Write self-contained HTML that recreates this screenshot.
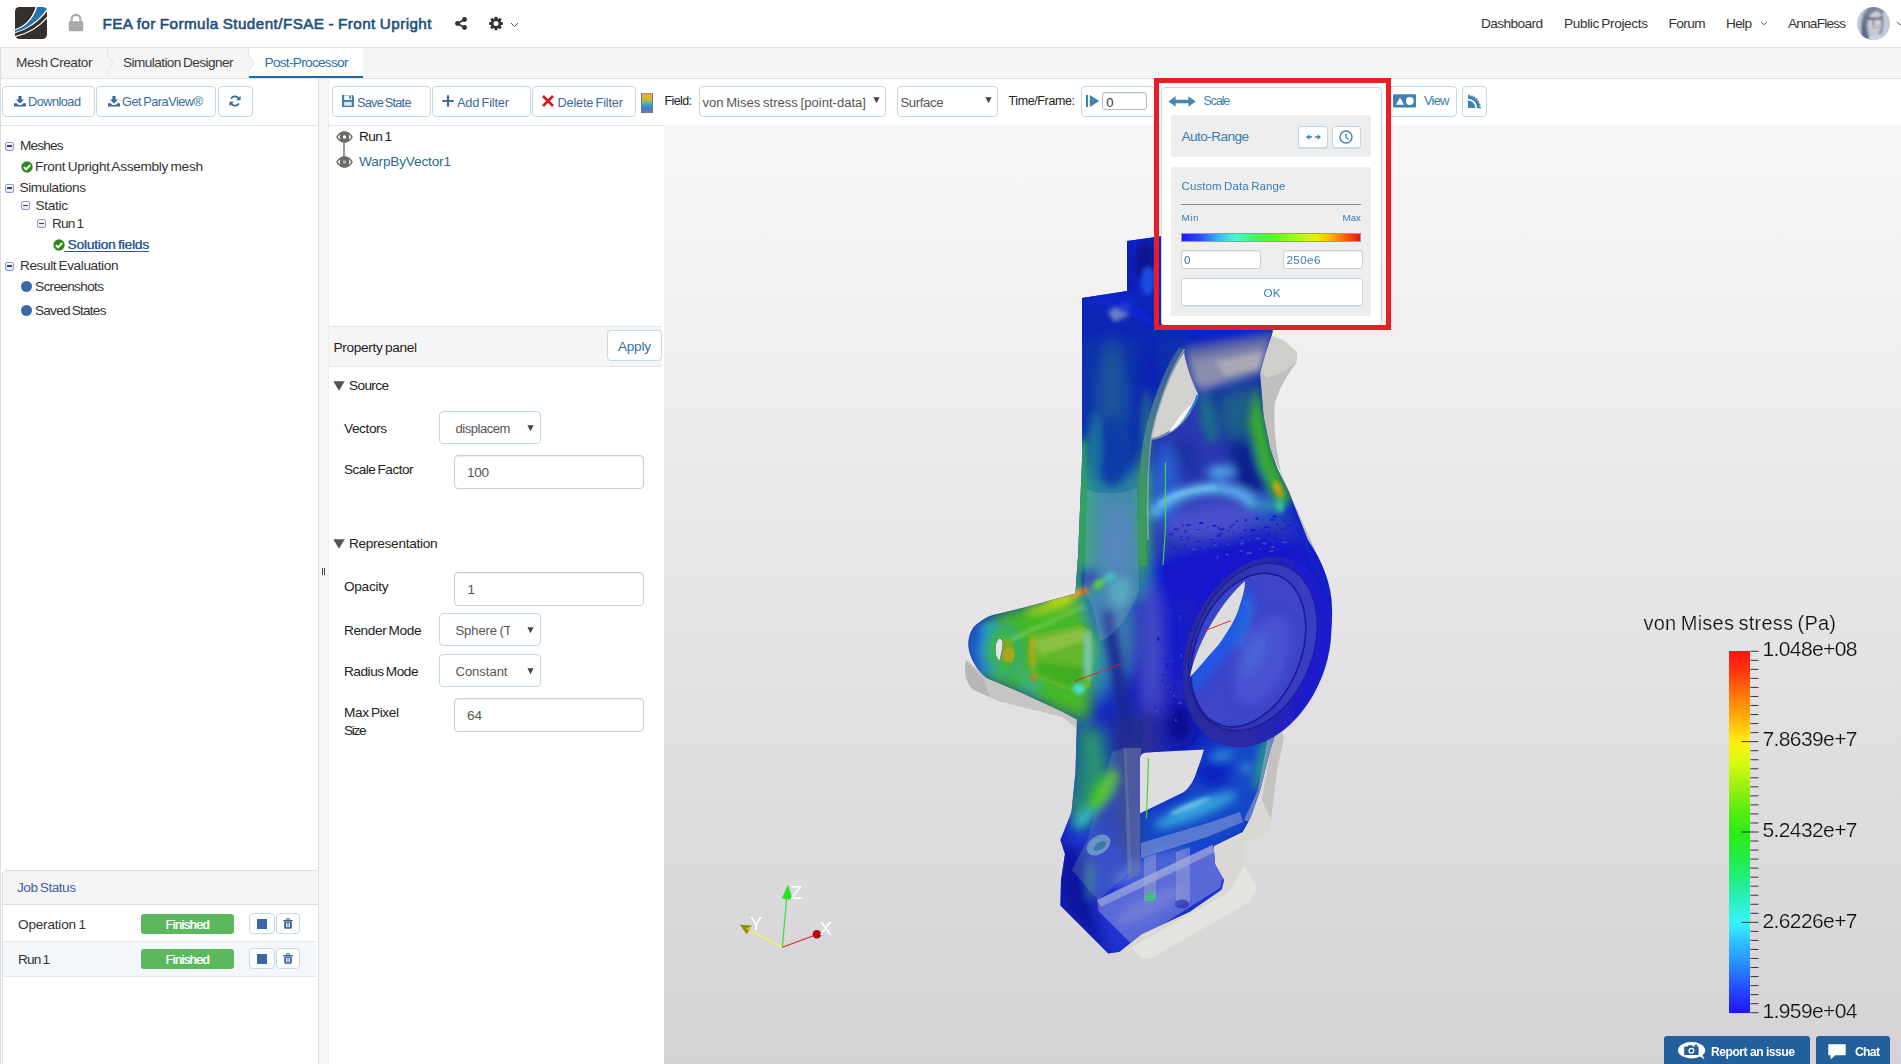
<!DOCTYPE html>
<html lang="en">
<head>
<meta charset="utf-8">
<title>FEA for Formula Student/FSAE - Front Upright</title>
<style>
*{box-sizing:border-box;margin:0;padding:0}
html,body{width:1901px;height:1064px;overflow:hidden;background:#fff}
body{font-family:"Liberation Sans",sans-serif;font-size:14px;color:#333;position:relative}
.abs{position:absolute}
.t{position:absolute;white-space:pre;display:block}
.btn{position:absolute;background:#fff;border:1px solid #c3d9ea;border-radius:4px}
.inp{position:absolute;background:#fff;border:1px solid #ccc;border-radius:4px;box-shadow:inset 0 1px 1px rgba(0,0,0,.075)}
svg{position:absolute;overflow:visible}
</style>
</head>
<body>
<div class="abs" style="left:0;top:0;width:1901px;height:48px;background:#fff;border-bottom:1px solid #e4e4e4"></div>
<svg style="left:15px;top:7px" width="32" height="32" viewBox="0 0 32 32">
<defs><clipPath id="lg"><rect x="0" y="0" width="32" height="32" rx="4.5"/></clipPath></defs>
<g clip-path="url(#lg)">
<rect width="32" height="32" fill="#35302d"/>
<path d="M21 -1 C17 12 10 19 -1 22.5 L-1 26.5 C13 23 25 14 33 3 L33 -1 Z" fill="#fff"/>
<path d="M22.5 -1 C18.5 12.5 10.5 20 -1 23.8 L-1 25.6 C12 22 24 13.5 33 0.5 L33 -1 Z" fill="#2473ad"/>
<path d="M-1 29.8 C13 27 25 19 33 9.5" fill="none" stroke="#fff" stroke-width="1.2"/>
</g></svg>
<svg style="left:68px;top:13px" width="16" height="19" viewBox="0 0 16 19">
<path d="M3.6 9 V6.2 a4.4 4.4 0 0 1 8.8 0 V9" fill="none" stroke="#aaa" stroke-width="2.2"/>
<rect x="0.8" y="8.2" width="14.4" height="10" rx="1.3" fill="#aaa"/></svg>
<span class="t" style="left:102.5px;top:16.4px;font-size:15.26px;height:15.3px;line-height:15.3px;letter-spacing:0.422px;word-spacing:-0.60px;color:#24507e;-webkit-text-stroke:0.6px #24507e;">FEA for Formula Student/FSAE - Front Upright</span>
<svg style="left:455px;top:17px" width="12" height="13" viewBox="0 0 12 13">
<g fill="#333" stroke="#333"><circle cx="9.5" cy="2.5" r="2.45" stroke="none"/><circle cx="2.5" cy="6.5" r="2.45" stroke="none"/><circle cx="9.5" cy="10.5" r="2.45" stroke="none"/>
<path d="M9.5 2.5 L2.5 6.5 L9.5 10.5" fill="none" stroke-width="1.9"/></g></svg>
<svg style="left:488px;top:16px" width="16" height="16" viewBox="0 0 16 16"><path d="M12.98 5.99 L14.87 6.13 L14.87 8.87 L12.98 9.01 L12.59 9.95 L13.82 11.39 L11.89 13.32 L10.45 12.09 L9.51 12.48 L9.37 14.37 L6.63 14.37 L6.49 12.48 L5.55 12.09 L4.11 13.32 L2.18 11.39 L3.41 9.95 L3.02 9.01 L1.13 8.87 L1.13 6.13 L3.02 5.99 L3.41 5.05 L2.18 3.61 L4.11 1.68 L5.55 2.91 L6.49 2.52 L6.63 0.63 L9.37 0.63 L9.51 2.52 L10.45 2.91 L11.89 1.68 L13.82 3.61 L12.59 5.05 Z M5.50 7.50 a2.50 2.50 0 1 0 5.00 0 a2.50 2.50 0 1 0 -5.00 0 Z" fill="#333" fill-rule="evenodd"/></svg>
<svg style="left:510px;top:22px" width="9" height="6" viewBox="0 0 9 6"><path d="M1 1 L4.5 4.5 L8 1" fill="none" stroke="#555" stroke-width="1"/></svg>
<span class="t" style="left:1481.0px;top:17.4px;font-size:13.63px;height:13.6px;line-height:13.6px;letter-spacing:-0.582px;word-spacing:-1.06px;color:#333;">Dashboard</span>
<span class="t" style="left:1564.0px;top:17.4px;font-size:13.63px;height:13.6px;line-height:13.6px;letter-spacing:-0.362px;word-spacing:-1.06px;color:#333;">Public Projects</span>
<span class="t" style="left:1668.5px;top:17.4px;font-size:13.63px;height:13.6px;line-height:13.6px;letter-spacing:-0.594px;word-spacing:-1.06px;color:#333;">Forum</span>
<span class="t" style="left:1726.0px;top:17.4px;font-size:13.63px;height:13.6px;line-height:13.6px;letter-spacing:-0.677px;word-spacing:-1.06px;color:#333;">Help</span>
<svg style="left:1760px;top:21px" width="8" height="5" viewBox="0 0 8 5"><path d="M1 0.8 L4 3.8 L7 0.8" fill="none" stroke="#555" stroke-width="1"/></svg>
<span class="t" style="left:1788.0px;top:17.4px;font-size:13.63px;height:13.6px;line-height:13.6px;letter-spacing:-0.797px;word-spacing:-1.06px;color:#333;">AnnaFless</span>
<svg style="left:1857px;top:7px" width="33" height="33" viewBox="0 0 33 33">
<defs><clipPath id="av"><circle cx="16.5" cy="16.5" r="16.5"/></clipPath>
<filter id="avb"><feGaussianBlur stdDeviation="0.9"/></filter></defs>
<g clip-path="url(#av)"><rect width="33" height="33" fill="#c5c9d5"/>
<g filter="url(#avb)">
<path d="M14 -1 C5 3 3 16 5 34 L15 34 C9 25 9 12 15 6 C19 2.5 23 4 24.5 8 L27 5 C23 0 18 -1 14 -1 Z" fill="#76819c"/>
<path d="M9 8 C7 16 8 26 12 33 L6 33 C4 24 5 14 9 8 Z" fill="#5b6782"/>
<ellipse cx="18.3" cy="15.5" rx="6.3" ry="8.8" fill="#d5d0d8"/>
<path d="M11 33 C12 27 24 26 27 33 Z" fill="#d2d3dc"/>
<path d="M10.8 11.6 H25" stroke="#2c3a55" stroke-width="1.9"/>
<path d="M16.3 12 V17.5 H18" stroke="#3a4660" stroke-width="1.2" fill="none"/>
<path d="M14 19.5 Q18 22.5 22.5 19" stroke="#6a6f86" stroke-width="1" fill="none"/>
<path d="M24.5 8 C26 15 25 22 22.5 27" stroke="#5f6a86" stroke-width="1.6" fill="none"/>
</g></g></svg>
<svg style="left:1896px;top:21px" width="8" height="5" viewBox="0 0 8 5"><path d="M1 0.8 L4 3.8 L7 0.8" fill="none" stroke="#555" stroke-width="1"/></svg>
<div class="abs" style="left:0;top:48px;width:1901px;height:31px;background:#f5f5f5;border-bottom:1px solid #e2e2e2"></div>
<div class="abs" style="left:0;top:48px;width:1px;height:31px;background:#ddd"></div>
<svg style="left:100px;top:48px" width="16" height="30" viewBox="0 0 16 30"><path d="M7.5 0 V7.5 L13 15 L7.5 22.5 V30" fill="none" stroke="#e6e6e6" stroke-width="1"/></svg>
<div class="abs" style="left:249px;top:48px;width:114px;height:30px;background:#fff;border-bottom:2px solid #236aa5"></div>
<svg style="left:241px;top:48px" width="16" height="30" viewBox="0 0 16 30"><path d="M8 0 V7.5 L13.5 15 L8 22.5 V30 H0 V0 Z" fill="#f5f5f5" stroke="none"/><path d="M7.5 0 V7.5 L13 15 L7.5 22.5 V30" fill="none" stroke="#e6e6e6" stroke-width="1"/></svg>
<span class="t" style="left:16.0px;top:55.9px;font-size:13.63px;height:13.6px;line-height:13.6px;letter-spacing:-0.453px;word-spacing:-1.06px;color:#3a3a3a;">Mesh Creator</span>
<span class="t" style="left:123.0px;top:55.9px;font-size:13.63px;height:13.6px;line-height:13.6px;letter-spacing:-0.576px;word-spacing:-1.06px;color:#3a3a3a;">Simulation Designer</span>
<span class="t" style="left:264.5px;top:55.9px;font-size:13.63px;height:13.6px;line-height:13.6px;letter-spacing:-0.703px;word-spacing:-1.06px;color:#2a6fa8;">Post-Processor</span>
<div class="abs" style="left:0;top:79px;width:319px;height:985px;background:#fff;border-left:1px solid #ddd;border-right:1px solid #ddd"></div>
<div class="abs" style="left:319px;top:79px;width:10px;height:985px;background:#f6f6f6;border-right:1px solid #eee"></div>
<div class="abs" style="left:322px;top:568px;width:1px;height:7px;background:#444"></div><div class="abs" style="left:324px;top:568px;width:1px;height:7px;background:#444"></div>
<div class="btn" style="left:1.5px;top:86.2px;width:93px;height:30.4px"></div>
<svg style="left:14px;top:96px" width="12" height="11" viewBox="0 0 12 11"><path d="M4.4 0 H7.6 V3.6 H10 L6 7.6 L2 3.6 H4.4 Z" fill="#3b6aa0"/><path d="M0 7.2 H2.6 L4.3 8.9 H7.7 L9.4 7.2 H12 V10.6 H0 Z" fill="#3b6aa0"/></svg>
<span class="t" style="left:28.0px;top:95.8px;font-size:12.77px;height:12.8px;line-height:12.8px;letter-spacing:-0.540px;word-spacing:-1.00px;color:#3b6aa0;">Download</span>
<div class="btn" style="left:95.5px;top:86.2px;width:120px;height:30.4px"></div>
<svg style="left:108px;top:96px" width="12" height="11" viewBox="0 0 12 11"><path d="M4.4 0 H7.6 V3.6 H10 L6 7.6 L2 3.6 H4.4 Z" fill="#3b6aa0"/><path d="M0 7.2 H2.6 L4.3 8.9 H7.7 L9.4 7.2 H12 V10.6 H0 Z" fill="#3b6aa0"/></svg>
<span class="t" style="left:122.0px;top:95.8px;font-size:12.77px;height:12.8px;line-height:12.8px;letter-spacing:-0.495px;word-spacing:-1.00px;color:#3b6aa0;">Get ParaView®</span>
<div class="btn" style="left:217.5px;top:86.2px;width:35px;height:30.4px"></div>
<svg style="left:229px;top:95px" width="12" height="12" viewBox="0 0 12 12"><g fill="none" stroke="#3b6aa0" stroke-width="1.8"><path d="M10.2 4.6 A4.6 4.6 0 0 0 2.0 3.4"/><path d="M1.8 7.4 A4.6 4.6 0 0 0 10.0 8.6"/></g><path d="M11.6 0.8 V5.2 H7.2 Z" fill="#3b6aa0"/><path d="M0.4 11.2 V6.8 H4.8 Z" fill="#3b6aa0"/></svg>
<div class="abs" style="left:1px;top:125px;width:318px;height:1px;background:#e5e5e5"></div>
<div class="abs" style="left:5px;top:141.5px;width:9px;height:9px;border:1px solid #8f98c8;border-radius:2px;background:linear-gradient(#fff,#e4e6f2)"></div><div class="abs" style="left:7px;top:145.3px;width:5px;height:1.4px;background:#2f3aa0"></div>
<span class="t" style="left:20.0px;top:139.4px;font-size:13.63px;height:13.6px;line-height:13.6px;letter-spacing:-0.844px;word-spacing:-1.06px;color:#333;">Meshes</span>
<svg style="left:21px;top:160.5px" width="12" height="12" viewBox="0 0 12 12"><circle cx="6" cy="6" r="5.7" fill="#2e8a1f"/><path d="M2.9 6.2 L5.1 8.4 L9.2 4" fill="none" stroke="#fff" stroke-width="1.9"/></svg>
<span class="t" style="left:35.0px;top:160.4px;font-size:13.63px;height:13.6px;line-height:13.6px;letter-spacing:-0.290px;word-spacing:-1.06px;color:#333;">Front Upright Assembly mesh</span>
<div class="abs" style="left:5px;top:183.5px;width:9px;height:9px;border:1px solid #8f98c8;border-radius:2px;background:linear-gradient(#fff,#e4e6f2)"></div><div class="abs" style="left:7px;top:187.3px;width:5px;height:1.4px;background:#2f3aa0"></div>
<span class="t" style="left:19.5px;top:181.4px;font-size:13.63px;height:13.6px;line-height:13.6px;letter-spacing:-0.394px;word-spacing:-1.06px;color:#333;">Simulations</span>
<div class="abs" style="left:21px;top:201px;width:9px;height:9px;border:1px solid #8f98c8;border-radius:2px;background:linear-gradient(#fff,#e4e6f2)"></div><div class="abs" style="left:23px;top:204.8px;width:5px;height:1.4px;background:#2f3aa0"></div>
<span class="t" style="left:35.5px;top:199.4px;font-size:13.63px;height:13.6px;line-height:13.6px;letter-spacing:-0.316px;word-spacing:-1.06px;color:#333;">Static</span>
<div class="abs" style="left:37px;top:219px;width:9px;height:9px;border:1px solid #8f98c8;border-radius:2px;background:linear-gradient(#fff,#e4e6f2)"></div><div class="abs" style="left:39px;top:222.8px;width:5px;height:1.4px;background:#2f3aa0"></div>
<span class="t" style="left:52.0px;top:217.4px;font-size:13.63px;height:13.6px;line-height:13.6px;letter-spacing:-0.828px;word-spacing:-1.06px;color:#333;">Run 1</span>
<svg style="left:53px;top:238.5px" width="12" height="12" viewBox="0 0 12 12"><circle cx="6" cy="6" r="5.7" fill="#2e8a1f"/><path d="M2.9 6.2 L5.1 8.4 L9.2 4" fill="none" stroke="#fff" stroke-width="1.9"/></svg>
<span class="t" style="left:67.5px;top:238.4px;font-size:13.63px;height:13.6px;line-height:13.6px;letter-spacing:-0.163px;word-spacing:-1.06px;color:#2f5d94;text-shadow:0.3px 0 0 #2f5d94;">Solution fields</span>
<div class="abs" style="left:64px;top:250.5px;width:85px;height:1px;background:#2f5d94"></div>
<div class="abs" style="left:5px;top:261.5px;width:9px;height:9px;border:1px solid #8f98c8;border-radius:2px;background:linear-gradient(#fff,#e4e6f2)"></div><div class="abs" style="left:7px;top:265.3px;width:5px;height:1.4px;background:#2f3aa0"></div>
<span class="t" style="left:20.0px;top:259.4px;font-size:13.63px;height:13.6px;line-height:13.6px;letter-spacing:-0.405px;word-spacing:-1.06px;color:#333;">Result Evaluation</span>
<div class="abs" style="left:21px;top:280.5px;width:11.4px;height:11.4px;border-radius:50%;background:#3d68a8"></div>
<span class="t" style="left:35.0px;top:280.4px;font-size:13.63px;height:13.6px;line-height:13.6px;letter-spacing:-0.675px;word-spacing:-1.06px;color:#333;">Screenshots</span>
<div class="abs" style="left:21px;top:304.5px;width:11.4px;height:11.4px;border-radius:50%;background:#3d68a8"></div>
<span class="t" style="left:35.0px;top:304.4px;font-size:13.63px;height:13.6px;line-height:13.6px;letter-spacing:-0.773px;word-spacing:-1.06px;color:#333;">Saved States</span>
<div class="abs" style="left:2px;top:869.5px;width:317px;height:200px;border:1px solid #ddd;border-radius:4px 4px 0 0;background:#fff"></div>
<div class="abs" style="left:3px;top:870.5px;width:315px;height:34px;background:#f5f5f5;border-bottom:1px solid #ddd;border-radius:3px 3px 0 0"></div>
<span class="t" style="left:17.0px;top:881.4px;font-size:13.63px;height:13.6px;line-height:13.6px;letter-spacing:-0.481px;word-spacing:-1.06px;color:#3f62a0;">Job Status</span>
<div class="abs" style="left:3px;top:906.5px;width:313px;height:35px;background:#fff;border-bottom:1px solid #e8e8e8"></div><span class="t" style="left:18.0px;top:917.9px;font-size:13.63px;height:13.6px;line-height:13.6px;letter-spacing:-0.214px;word-spacing:-1.06px;color:#333;">Operation 1</span><div class="abs" style="left:141px;top:914px;width:93px;height:20px;background:#5cb85c;border-radius:3px"></div><span class="t" style="left:165.5px;top:918.5px;font-size:12.48px;height:12.5px;line-height:12.5px;letter-spacing:-0.449px;word-spacing:-0.97px;color:#fff;text-shadow:0.35px 0 0 #fff;">Finished</span><div class="btn" style="left:249px;top:913px;width:25.5px;height:21px"></div><div class="abs" style="left:256.5px;top:918.5px;width:10.5px;height:10px;background:#3a66a7"></div><div class="btn" style="left:275.5px;top:913px;width:24.5px;height:21px"></div><svg style="left:283px;top:918px" width="10" height="11" viewBox="0 0 10 11"><path d="M0.3 2 H9.7 V3.2 H0.3 Z M3.2 2 V0.9 Q3.2 0.3 3.8 0.3 H6.2 Q6.8 0.3 6.8 0.9 V2 H5.9 V1.2 H4.1 V2 Z" fill="#3a5fa0"/><path d="M1.2 3.6 H8.8 V9.6 Q8.8 10.7 7.7 10.7 H2.3 Q1.2 10.7 1.2 9.6 Z M3 4.8 V9.3 H3.9 V4.8 Z M4.55 4.8 V9.3 H5.45 V4.8 Z M6.1 4.8 V9.3 H7 V4.8 Z" fill="#3a5fa0" fill-rule="evenodd"/></svg>
<div class="abs" style="left:3px;top:941.5px;width:313px;height:35px;background:#f3f6fb;border-bottom:1px solid #e8e8e8"></div><span class="t" style="left:18.0px;top:952.9px;font-size:13.63px;height:13.6px;line-height:13.6px;letter-spacing:-0.828px;word-spacing:-1.06px;color:#333;">Run 1</span><div class="abs" style="left:141px;top:949px;width:93px;height:20px;background:#5cb85c;border-radius:3px"></div><span class="t" style="left:165.5px;top:953.5px;font-size:12.48px;height:12.5px;line-height:12.5px;letter-spacing:-0.449px;word-spacing:-0.97px;color:#fff;text-shadow:0.35px 0 0 #fff;">Finished</span><div class="btn" style="left:249px;top:948px;width:25.5px;height:21px"></div><div class="abs" style="left:256.5px;top:953.5px;width:10.5px;height:10px;background:#3a66a7"></div><div class="btn" style="left:275.5px;top:948px;width:24.5px;height:21px"></div><svg style="left:283px;top:953px" width="10" height="11" viewBox="0 0 10 11"><path d="M0.3 2 H9.7 V3.2 H0.3 Z M3.2 2 V0.9 Q3.2 0.3 3.8 0.3 H6.2 Q6.8 0.3 6.8 0.9 V2 H5.9 V1.2 H4.1 V2 Z" fill="#3a5fa0"/><path d="M1.2 3.6 H8.8 V9.6 Q8.8 10.7 7.7 10.7 H2.3 Q1.2 10.7 1.2 9.6 Z M3 4.8 V9.3 H3.9 V4.8 Z M4.55 4.8 V9.3 H5.45 V4.8 Z M6.1 4.8 V9.3 H7 V4.8 Z" fill="#3a5fa0" fill-rule="evenodd"/></svg>
<div class="abs" style="left:329px;top:79px;width:335px;height:985px;background:#fff"></div>
<div class="btn" style="left:331.5px;top:86.2px;width:99px;height:30.4px"></div>
<svg style="left:342px;top:95px" width="12" height="12" viewBox="0 0 12 12"><path d="M0 0 H10.6 L12 1.4 V12 H0 Z" fill="#3d80ae"/><rect x="2.2" y="0.4" width="7.6" height="4.5" fill="#fff"/><rect x="7.2" y="1" width="1.6" height="2.9" fill="#3d80ae"/><rect x="2.2" y="6.9" width="7.6" height="3.8" fill="#e9e9e9"/></svg>
<span class="t" style="left:357.0px;top:96.8px;font-size:12.77px;height:12.8px;line-height:12.8px;letter-spacing:-0.773px;word-spacing:-1.00px;color:#3b6aa0;">Save State</span>
<div class="btn" style="left:431.5px;top:86.2px;width:99px;height:30.4px"></div>
<svg style="left:442px;top:95px" width="12" height="12" viewBox="0 0 12 12"><path d="M4.9 0.3 H7.1 V4.9 H11.7 V7.1 H7.1 V11.7 H4.9 V7.1 H0.3 V4.9 H4.9 Z" fill="#3d6d94"/></svg>
<span class="t" style="left:457.0px;top:96.8px;font-size:12.77px;height:12.8px;line-height:12.8px;letter-spacing:-0.182px;word-spacing:-1.00px;color:#3b6aa0;">Add Filter</span>
<div class="btn" style="left:531.5px;top:86.2px;width:104px;height:30.4px"></div>
<svg style="left:542px;top:95px" width="12" height="12" viewBox="0 0 12 12"><path d="M1 1 L11 11 M11 1 L1 11" stroke="#d9161c" stroke-width="2.6" fill="none"/></svg>
<span class="t" style="left:557.5px;top:96.8px;font-size:12.77px;height:12.8px;line-height:12.8px;letter-spacing:-0.194px;word-spacing:-1.00px;color:#3b6aa0;">Delete Filter</span>
<div class="abs" style="left:329px;top:125px;width:330px;height:1px;background:#e8e8e8"></div>
<div class="abs" style="left:343.2px;top:141px;width:1.8px;height:16px;background:#999"></div>
<svg style="left:336px;top:130.5px" width="17" height="12" viewBox="0 0 17 12"><path d="M0.2 6 C2.6 1.6 5.6 0.2 8.5 0.2 C11.4 0.2 14.4 1.6 16.8 6 C14.4 10.4 11.4 11.8 8.5 11.8 C5.6 11.8 2.6 10.4 0.2 6 Z" fill="#6c6c64"/><path d="M1.9 6 C2.8 4.6 3.6 3.8 4.4 3.2 C3.6 5 3.6 7 4.4 8.8 C3.6 8.2 2.8 7.4 1.9 6 Z M15.1 6 C14.2 4.6 13.4 3.8 12.6 3.2 C13.4 5 13.4 7 12.6 8.8 C13.4 8.2 14.2 7.4 15.1 6 Z" fill="#fff"/><circle cx="8.5" cy="6" r="1.7" fill="#fff"/></svg>
<svg style="left:336px;top:155.8px" width="17" height="12" viewBox="0 0 17 12"><path d="M0.2 6 C2.6 1.6 5.6 0.2 8.5 0.2 C11.4 0.2 14.4 1.6 16.8 6 C14.4 10.4 11.4 11.8 8.5 11.8 C5.6 11.8 2.6 10.4 0.2 6 Z" fill="#6c6c64"/><path d="M1.9 6 C2.8 4.6 3.6 3.8 4.4 3.2 C3.6 5 3.6 7 4.4 8.8 C3.6 8.2 2.8 7.4 1.9 6 Z M15.1 6 C14.2 4.6 13.4 3.8 12.6 3.2 C13.4 5 13.4 7 12.6 8.8 C13.4 8.2 14.2 7.4 15.1 6 Z" fill="#fff"/><circle cx="8.5" cy="6" r="1.7" fill="#b8b8b4"/></svg>
<span class="t" style="left:359.0px;top:129.9px;font-size:13.63px;height:13.6px;line-height:13.6px;letter-spacing:-0.578px;word-spacing:-1.06px;color:#1a1a1a;">Run 1</span>
<span class="t" style="left:359.0px;top:154.9px;font-size:13.63px;height:13.6px;line-height:13.6px;letter-spacing:-0.180px;word-spacing:-1.06px;color:#2a6a9a;">WarpByVector1</span>
<div class="abs" style="left:329px;top:325.8px;width:333px;height:41.7px;background:#f5f5f5;border-top:1px solid #e8e8e8;border-bottom:1px solid #e4e4e4"></div>
<span class="t" style="left:333.5px;top:340.9px;font-size:13.63px;height:13.6px;line-height:13.6px;letter-spacing:-0.312px;word-spacing:-1.06px;color:#222;">Property panel</span>
<div class="btn" style="left:606.6px;top:329.7px;width:55px;height:31px"></div>
<span class="t" style="left:618.0px;top:339.5px;font-size:13.63px;height:13.6px;line-height:13.6px;letter-spacing:-0.273px;word-spacing:-1.06px;color:#3a6ea5;">Apply</span>
<svg style="left:332.5px;top:380.5px" width="12" height="10" viewBox="0 0 12 10"><path d="M0.3 0.3 H11.7 L6 9.8 Z" fill="#555"/></svg>
<span class="t" style="left:349.0px;top:379.4px;font-size:13.63px;height:13.6px;line-height:13.6px;letter-spacing:-0.634px;word-spacing:-1.06px;color:#222;">Source</span>
<span class="t" style="left:344.0px;top:422.4px;font-size:13.63px;height:13.6px;line-height:13.6px;letter-spacing:-0.409px;word-spacing:-1.06px;color:#222;">Vectors</span>
<div class="btn" style="left:439px;top:410.8px;width:102px;height:33.7px"></div>
<div class="abs" style="left:455px;top:418px;width:54.5px;height:20px;overflow:hidden"><span class="t" style="left:0.5px;top:3.9px;font-size:13.06px;height:13.1px;line-height:13.1px;letter-spacing:-0.489px;word-spacing:-1.02px;color:#555;">displacement</span></div>
<svg style="left:527px;top:424.5px" width="7" height="7" viewBox="0 0 7 7"><path d="M0.4 0.2 H6.6 L3.5 6.2 Z" fill="#444"/></svg>
<span class="t" style="left:344.0px;top:463.4px;font-size:13.63px;height:13.6px;line-height:13.6px;letter-spacing:-0.538px;word-spacing:-1.06px;color:#222;">Scale Factor</span>
<div class="inp" style="left:454px;top:455px;width:190px;height:34px"></div>
<span class="t" style="left:467.0px;top:465.9px;font-size:13.63px;height:13.6px;line-height:13.6px;letter-spacing:-0.367px;word-spacing:-1.06px;color:#555;">100</span>
<svg style="left:332.5px;top:538.5px" width="12" height="10" viewBox="0 0 12 10"><path d="M0.3 0.3 H11.7 L6 9.8 Z" fill="#555"/></svg>
<span class="t" style="left:349.0px;top:537.4px;font-size:13.63px;height:13.6px;line-height:13.6px;letter-spacing:-0.302px;word-spacing:-1.06px;color:#222;">Representation</span>
<span class="t" style="left:344.0px;top:580.4px;font-size:13.63px;height:13.6px;line-height:13.6px;letter-spacing:-0.284px;word-spacing:-1.06px;color:#222;">Opacity</span>
<div class="inp" style="left:454px;top:572px;width:190px;height:34px"></div>
<span class="t" style="left:467.5px;top:582.9px;font-size:13.63px;height:13.6px;line-height:13.6px;letter-spacing:0.000px;word-spacing:-1.06px;color:#555;">1</span>
<span class="t" style="left:344.0px;top:623.9px;font-size:13.63px;height:13.6px;line-height:13.6px;letter-spacing:-0.400px;word-spacing:-1.06px;color:#222;">Render Mode</span>
<div class="btn" style="left:439px;top:612.8px;width:102px;height:33.7px"></div>
<div class="abs" style="left:455px;top:620px;width:54.5px;height:20px;overflow:hidden"><span class="t" style="left:0.5px;top:3.9px;font-size:13.06px;height:13.1px;line-height:13.1px;letter-spacing:-0.110px;word-spacing:-1.02px;color:#555;">Sphere (Texture)</span></div>
<svg style="left:527px;top:626.5px" width="7" height="7" viewBox="0 0 7 7"><path d="M0.4 0.2 H6.6 L3.5 6.2 Z" fill="#444"/></svg>
<span class="t" style="left:344.0px;top:664.9px;font-size:13.63px;height:13.6px;line-height:13.6px;letter-spacing:-0.473px;word-spacing:-1.06px;color:#222;">Radius Mode</span>
<div class="btn" style="left:439px;top:653.8px;width:102px;height:33.7px"></div>
<span class="t" style="left:455.5px;top:664.9px;font-size:13.06px;height:13.1px;line-height:13.1px;letter-spacing:-0.033px;word-spacing:-1.02px;color:#555;">Constant</span>
<svg style="left:527px;top:667.5px" width="7" height="7" viewBox="0 0 7 7"><path d="M0.4 0.2 H6.6 L3.5 6.2 Z" fill="#444"/></svg>
<span class="t" style="left:344.0px;top:706.4px;font-size:13.63px;height:13.6px;line-height:13.6px;letter-spacing:-0.375px;word-spacing:-1.06px;color:#222;">Max Pixel</span>
<span class="t" style="left:344.0px;top:724.4px;font-size:13.63px;height:13.6px;line-height:13.6px;letter-spacing:-1.339px;word-spacing:-1.06px;color:#222;">Size</span>
<div class="inp" style="left:454px;top:698px;width:190px;height:34px"></div>
<span class="t" style="left:467.0px;top:708.9px;font-size:13.63px;height:13.6px;line-height:13.6px;letter-spacing:-0.156px;word-spacing:-1.06px;color:#555;">64</span>
<div class="abs" style="left:641px;top:93px;width:12px;height:19.5px;background:linear-gradient(#f2a61a 0%,#e6b422 18%,#8fbf6a 42%,#35a0c8 62%,#3a7fd0 80%,#7a6fb0 100%);border:1px solid #7a7a7a;border-top-color:#999"></div>
<span class="t" style="left:664.5px;top:95.0px;font-size:12.48px;height:12.5px;line-height:12.5px;letter-spacing:-0.600px;word-spacing:-0.97px;color:#222;">Field:</span>
<div class="btn" style="left:698.5px;top:86.2px;width:187px;height:30.4px"></div>
<span class="t" style="left:702.5px;top:95.9px;font-size:13.06px;height:13.1px;line-height:13.1px;letter-spacing:0.018px;word-spacing:-1.02px;color:#555;">von Mises stress [point-data]</span>
<svg style="left:872.5px;top:97px" width="7" height="7" viewBox="0 0 7 7"><path d="M0.4 0.2 H6.6 L3.5 6.2 Z" fill="#444"/></svg>
<div class="btn" style="left:896.5px;top:86.2px;width:101px;height:30.4px"></div>
<span class="t" style="left:900.5px;top:95.9px;font-size:13.06px;height:13.1px;line-height:13.1px;letter-spacing:-0.328px;word-spacing:-1.02px;color:#555;">Surface</span>
<svg style="left:984.5px;top:97px" width="7" height="7" viewBox="0 0 7 7"><path d="M0.4 0.2 H6.6 L3.5 6.2 Z" fill="#444"/></svg>
<span class="t" style="left:1008.5px;top:95.0px;font-size:12.48px;height:12.5px;line-height:12.5px;letter-spacing:-0.370px;word-spacing:-0.97px;color:#222;">Time/Frame:</span>
<div class="btn" style="left:1080.5px;top:86.2px;width:74px;height:30.4px"></div>
<svg style="left:1086px;top:95px" width="14" height="12" viewBox="0 0 14 12"><rect x="0" y="0" width="2" height="12" fill="#3f82b0"/><path d="M3.8 0 L13.2 6 L3.8 12 Z" fill="#3f82b0"/></svg>
<div class="inp" style="left:1102px;top:92px;width:45px;height:18px;border-radius:3px;border-color:#bbb"></div>
<span class="t" style="left:1106.3px;top:95.7px;font-size:13.06px;height:13.1px;line-height:13.1px;letter-spacing:0.000px;word-spacing:-1.02px;color:#333;">0</span>
<div class="btn" style="left:1387px;top:86.2px;width:70px;height:30.4px"></div>
<svg style="left:1393px;top:94px" width="23" height="14" viewBox="0 0 23 14"><rect x="0" y="0.2" width="23" height="13.4" rx="1" fill="#3f82b0"/><path d="M3 10.8 L7 3.6 L11 10.8 Z" fill="#fff"/><circle cx="16.8" cy="7" r="3.9" fill="#fff"/></svg>
<span class="t" style="left:1424.0px;top:94.0px;font-size:13.06px;height:13.1px;line-height:13.1px;letter-spacing:-0.849px;word-spacing:-1.02px;color:#3a7db0;">View</span>
<div class="btn" style="left:1462px;top:86.2px;width:25px;height:30.4px"></div>
<svg style="left:1468px;top:95px" width="13" height="13" viewBox="0 0 13 13">
<path d="M0 5.6 A7.4 7.4 0 0 1 7.4 13 H0 Z" fill="#3f82b0"/>
<path d="M0 2.6 A10.4 10.4 0 0 1 10.4 13" fill="none" stroke="#3f82b0" stroke-width="2.4"/>
<path d="M0.2 0.2 L2 2 M3.4 0.6 L4.4 2.8 M6.4 1.6 L6.2 4 M9 3.6 L8 5.4 M11 6.4 L9.4 7 M12.4 9.6 L10.2 9.6 M12.8 12.6 H10.5" stroke="#3f82b0" stroke-width="2" fill="none"/>
</svg>
<div class="abs" style="left:659px;top:124.5px;width:1242px;height:1px;background:#e4e4e4"></div>
<div class="abs" style="left:664px;top:125px;width:1237px;height:939px;background:linear-gradient(#f9f8f9 0%,#ebe9eb 38%,#dfdcdf 72%,#d6d3d6 100%)"></div>
<svg style="left:664px;top:125px" width="1237" height="939" viewBox="664 125 1237 939">
<defs>
<clipPath id="body"><path clip-rule="evenodd" d="M1082 298 L1127 291 L1127 241 L1200 231 L1275 318 L1272 334 L1266 352 L1260 373 L1263.6 416 L1270 448 L1278 470 L1289 492 L1308 540 C1322 560 1332 585 1332 608 C1334 650 1315 700 1290 722 L1277.6 727 L1269.6 752.7 L1260 791 L1250.4 818 L1242.5 832 L1213.7 846 L1215 864 L1224 880 L1221.7 889.5 L1189.7 911.8 L1141.8 934 L1119.5 951.8 L1108.3 953.4 L1060.4 905.4 L1061 880 L1065 854 L1060.4 840 L1071.5 812 L1075.5 772 L1077 719.5 L1062 711.5 L1022 693 L986.7 678 C976 670 968 655 968.4 643 C969 633 973 627 977 624 C983 619 988 616.5 993 615 L1030 606 L1075.4 593.5 L1078 556 L1082 460 Z M1245 581 C1225 598 1197 640 1190 677 C1197 670 1209 655 1218 645.5 C1228 632 1236 618 1239 608 C1242 598 1245 590 1245 581 Z M1146 752.5 L1204 749.5 C1202 757 1200 763 1197.7 768.7 C1195 778 1192 783 1189.7 786 C1187 790 1184 792.5 1180 794 L1140 813.5 L1139.8 760 C1140 755 1142 753 1146 752.5 Z M999 638.5 C996 641 995 647 995.6 652 C996 656 997.5 659.5 999.5 661 C1001 655 1002.5 648 1002.8 643 C1002.6 640 1001 638 999 638.5 Z"/></clipPath>
<filter id="b1" x="-20%" y="-20%" width="140%" height="140%"><feGaussianBlur stdDeviation="0.55"/></filter>
<filter id="b2" x="-30%" y="-30%" width="160%" height="160%"><feGaussianBlur stdDeviation="2"/></filter>
<filter id="b4" x="-30%" y="-30%" width="160%" height="160%"><feGaussianBlur stdDeviation="4"/></filter>
<filter id="b7" x="-40%" y="-40%" width="180%" height="180%"><feGaussianBlur stdDeviation="7"/></filter>
</defs>
<g filter="url(#b1)"><path d="M1263 337 L1272 336 L1283 340 L1297 352 L1297 362 C1289 372 1280 386 1275 403 C1273 423 1276 448 1281 472 L1294 503 L1316 552 L1308 540 L1289 492 L1270 448 L1263 416 L1260 373 Z" fill="#c0bfbd" /><path d="M1263 337 L1272 336 L1283 340 L1297 352 L1297 362 L1283 372 L1268 378 L1261 372 Z" fill="#cfcecb" /><path d="M966 660 C963 674 967 685 974 690 L1000 701.5 L1062 717 L1078 729 L1078 716 L1022 692 L986 676 Z" fill="#c6c5c3" /><path d="M966 660 C963 674 967 685 974 690 L990 697 L984 680 Z" fill="#b8b7b5" /><path d="M1279 724 L1284 738 L1277 770 L1269 832 L1244 845 L1244 864 L1258 888 L1249 902 L1151 958 L1142 958 L1119 951 L1142 934 L1190 912 L1222 889 L1224 880 L1215 864 L1214 846 L1242 832 L1260 791 Z" fill="#d9d8d4" /><path d="M1244 866 L1258 888 L1249 902 L1151 958 L1142 958 L1130 948 L1228 893 Z" fill="#e4e3df" /><path d="M1279 724 L1284 738 L1277 770 L1271 820 L1262 800 L1270 752 Z" fill="#c4c3c0" /></g>
<g clip-path="url(#body)">
<rect x="950" y="220" width="400" height="750" fill="#1426c4"/>
<g filter="url(#b7)"><path d="M1120 225 H1290 V345 H1120 Z" fill="#0c20c4" /><path d="M1075 290 H1190 V350 H1075 Z" fill="#0b26b6" /><path d="M1075 340 H1190 V610 H1075 Z" fill="#0d33aa" /><ellipse cx="1112" cy="400" rx="13" ry="60" fill="#1a549a"/><ellipse cx="1150" cy="380" rx="12" ry="40" fill="#0b22b4"/><path d="M1076 470 H1152 V600 H1076 Z" fill="#2a7ea2" /><ellipse cx="1086" cy="520" rx="7" ry="85" fill="#2c9c74"/><ellipse cx="1117" cy="545" rx="15" ry="40" fill="#4278ba"/><ellipse cx="1110" cy="610" rx="28" ry="14" fill="#2a6cb4"/><path d="M1198 392 L1261 373 L1265 420 L1274 455 L1294 500 L1240 505 L1215 450 Z" fill="#123c96" /><ellipse cx="1240" cy="414" rx="20" ry="24" fill="#1f5e8a"/><ellipse cx="1270" cy="520" rx="20" ry="12" fill="#2050c0"/><path d="M1150 440 L1198 396 L1245 480 L1300 540 L1250 585 L1190 650 L1150 600 Z" fill="#2a38b2" /><ellipse cx="1212" cy="520" rx="50" ry="17" fill="#4a50cc" transform="rotate(-8 1212 520)"/><ellipse cx="1175" cy="460" rx="22" ry="22" fill="#1e2ea0"/><ellipse cx="1166" cy="485" rx="13" ry="42" fill="#2a5ed0"/><ellipse cx="1266" cy="505" rx="12" ry="18" fill="#2a5cc8"/><path d="M1150 560 L1200 545 L1260 532 L1300 540 L1330 600 L1250 580 L1185 680 L1150 700 Z" fill="#1418cc" /><path d="M1125 600 L1195 600 L1188 720 L1125 745 Z" fill="#1c22bc" /><ellipse cx="1152" cy="670" rx="11" ry="80" fill="#3c3ec8"/><ellipse cx="1175" cy="640" rx="9" ry="40" fill="#1616cc"/><ellipse cx="1180" cy="725" rx="16" ry="22" fill="#0c0c94"/><ellipse cx="1104" cy="655" rx="9" ry="48" fill="#2a86b4"/><ellipse cx="1118" cy="632" rx="15" ry="52" fill="#3a7cac"/><ellipse cx="1151" cy="645" rx="11" ry="62" fill="#4248c4"/><ellipse cx="1150" cy="735" rx="12" ry="26" fill="#2a2a9a"/><path d="M968 640 L1000 612 L1076 592 L1098 640 L1090 722 L1060 712 L985 678 Z" fill="#42b82a" /><ellipse cx="1060" cy="706" rx="26" ry="7" fill="#46b828" transform="rotate(25 1060 706)"/><ellipse cx="1030" cy="682" rx="6" ry="10" fill="#2cb0a0" transform="rotate(-30 1030 682)"/><path d="M1074 725 L1102 728 L1112 790 L1082 832 L1068 815 Z" fill="#2a9470" /><ellipse cx="1080" cy="765" rx="5" ry="40" fill="#1c6c86"/><ellipse cx="1070" cy="842" rx="9" ry="12" fill="#1030bc"/><path d="M1110 715 L1142 715 L1140 880 L1124 880 Z" fill="#25308e" /><path d="M1205 748 L1280 724 L1262 791 L1247 832 L1140 882 L1140 812 L1182 794 Z" fill="#1848c8" /><ellipse cx="1214" cy="774" rx="18" ry="14" fill="#0e1cc0"/><path d="M1060 838 L1100 830 L1140 862 L1226 848 L1226 892 L1110 958 L1058 906 Z" fill="#2436d6" /><path d="M1058 838 L1084 850 L1092 900 L1112 958 L1058 906 Z" fill="#0a14a0" /></g>
<g filter="url(#b4)"><ellipse cx="1084" cy="540" rx="3.5" ry="60" fill="#34a860"/><ellipse cx="1112" cy="452" rx="19" ry="34" fill="#0d3ca8"/><ellipse cx="1095" cy="450" rx="5" ry="40" fill="#1f7c98"/><ellipse cx="1143.5" cy="512" rx="5" ry="64" fill="#3aa24e"/><ellipse cx="1147" cy="425" rx="4" ry="36" fill="#2a7a86"/><path d="M1184 348 L1274 333 L1261 373 L1200 391 L1193 384 Z" fill="#8a8eae" /><path d="M1184 348 L1274 333 L1270 345 L1190 360 Z" fill="#5f69a6" /><ellipse cx="1208" cy="418" rx="8" ry="26" fill="#1f6c8c" transform="rotate(-12 1208 418)"/><path d="M1229 445 L1262 445 L1270 490 L1240 490 Z" fill="#0a2090" /><path d="M1255 384 L1264 416 L1272 452 L1292 500 L1278 508 L1258 464 L1249 424 Z" fill="#38aa30" /><path d="M1284 508 C1272 505 1258 504 1246 506" fill="none" stroke="#34a8b4" stroke-width="5" /><path d="M1153 516 C1162 499 1190 489 1216 488 C1232 489 1244 495 1254 503" fill="none" stroke="#5cb4ec" stroke-width="11" /><ellipse cx="1221" cy="472" rx="14" ry="7" fill="#4a9ee0"/><ellipse cx="1120" cy="592" rx="11" ry="15" fill="#44a2bc"/><path d="M1101 612 L1112 608 L1136 735 L1122 742 Z" fill="#1a2a94" /><ellipse cx="1088" cy="578" rx="11" ry="11" fill="#1c40aa"/><ellipse cx="975" cy="648" rx="9" ry="28" fill="#1a54c8"/><ellipse cx="986" cy="640" rx="5" ry="20" fill="#2a9cc0" transform="rotate(15 986 640)"/><ellipse cx="1003" cy="651" rx="17" ry="25" fill="none" stroke="#2c9cc4" stroke-width="5" opacity="0.75" transform="rotate(-8 1003 651)"/><ellipse cx="1050" cy="607" rx="26" ry="5" fill="#a4d01a" transform="rotate(-14 1050 607)"/><ellipse cx="990" cy="628" rx="8" ry="6" fill="#28a4c4"/><ellipse cx="987" cy="668" rx="9" ry="6" fill="#2a90c4" transform="rotate(35 987 668)"/><ellipse cx="1000" cy="655" rx="5" ry="22" fill="#3ab060" transform="rotate(10 1000 655)"/><ellipse cx="1062" cy="598" rx="16" ry="4" fill="#d2de12" transform="rotate(-15 1062 598)"/><ellipse cx="1104" cy="790" rx="8" ry="24" fill="#4ccc1c" transform="rotate(32 1104 790)"/><ellipse cx="1084" cy="818" rx="12" ry="6" fill="#34b8c4" transform="rotate(-40 1084 818)"/><ellipse cx="1196" cy="810" rx="44" ry="8" fill="#34a2dc" transform="rotate(-22 1196 810)"/><ellipse cx="1262" cy="762" rx="4.5" ry="30" fill="#2aa286" transform="rotate(12 1262 762)"/><ellipse cx="1222" cy="756" rx="12" ry="5" fill="#2c84d4" transform="rotate(-15 1222 756)"/><ellipse cx="1246" cy="768" rx="5" ry="5" fill="#3a90d0"/><ellipse cx="1090" cy="880" rx="3.5" ry="20" fill="#2a8c8a"/><ellipse cx="1150" cy="868" rx="40" ry="12" fill="#4a62d8" transform="rotate(-22 1150 868)"/><ellipse cx="1150" cy="905" rx="38" ry="9" fill="#4654d4" transform="rotate(-28 1150 905)"/></g>
<ellipse cx="1006" cy="651" rx="8.5" ry="12" fill="#7aa828" transform="rotate(-8 1006 651)"/><ellipse cx="1009" cy="655" rx="5.5" ry="7.5" fill="#a4a822" transform="rotate(-8 1009 655)"/><path d="M1030 635 L1081 624 L1092 633.5 L1090.6 686 L1079.4 694 L1031.5 676.6 Z" fill="#63b72c" />
<g filter="url(#b2)"><ellipse cx="1144.5" cy="262" rx="9" ry="21" fill="#0a168e" transform="rotate(4 1144.5 262)"/><ellipse cx="1148" cy="281" rx="7" ry="14" fill="#1d4ce0" transform="rotate(4 1148 281)"/><path d="M1128 242 V290" fill="none" stroke="#0a1590" stroke-width="2" /><path d="M1083.5 299 V340" fill="none" stroke="#0a1a98" stroke-width="2" opacity="0.7" /><path d="M1108 312 L1122 303 L1130 304 L1128 316 L1114 322 Z" fill="#7f93c8" opacity="0.8" /><path d="M1084 301 L1127 294 L1153 322 L1150 326 L1110 306 Z" fill="#1428d4" opacity="0.8" /><path d="M1083.5 442 L1080 556 L1077.5 590" fill="none" stroke="#3ab444" stroke-width="3.4" /><path d="M1215 362 L1262 352 L1259 368 L1225 376 Z" fill="#a8a8b6" /><ellipse cx="1278" cy="489" rx="3.5" ry="9" fill="#c4b010" transform="rotate(-25 1278 489)"/><ellipse cx="1279" cy="491" rx="2" ry="4" fill="#f07808" transform="rotate(-25 1279 491)"/><path d="M1160 504 C1172 494 1195 488 1216 488" fill="none" stroke="#8cd2f0" stroke-width="3" opacity="0.8" /><ellipse cx="1280" cy="506" rx="4" ry="6" fill="#35c09a"/><ellipse cx="1084" cy="591.5" rx="5" ry="2.6" fill="#ff4a00" transform="rotate(-20 1084 591.5)"/><ellipse cx="1076" cy="594" rx="5" ry="2.4" fill="#ffb000" transform="rotate(-18 1076 594)"/><ellipse cx="1110" cy="577" rx="6" ry="4" fill="#30c0c0" transform="rotate(-30 1110 577)"/><ellipse cx="1099" cy="584" rx="7" ry="4" fill="#4cd024" transform="rotate(-35 1099 584)"/><path d="M1034 640 L1082 628 L1088 640 L1040 655 Z" fill="#8cc044" /><path d="M1036 662 L1086 668 L1080 690 L1036 674 Z" fill="#3fae22" /><ellipse cx="1032" cy="652" rx="2.4" ry="16" fill="#d0a010"/><ellipse cx="1088" cy="655" rx="4" ry="26" fill="#7ac4b8"/><ellipse cx="1079" cy="689" rx="6" ry="5" fill="#48e0d4"/><ellipse cx="1033" cy="678" rx="3" ry="3" fill="#e07010"/><path d="M1010 640 L1085 606" fill="none" stroke="#9ad060" stroke-width="2.2" /><ellipse cx="1190" cy="806" rx="22" ry="2.5" fill="#78d0e8" transform="rotate(-22 1190 806)"/></g>
<rect x="1207.1" y="526.7" width="1.5" height="1.0" fill="#1418cc"/><rect x="1271.8" y="516.8" width="5.0" height="1.0" fill="#1418cc"/><rect x="1283.3" y="520.0" width="1.5" height="1.5" fill="#1418cc"/><rect x="1219.4" y="528.6" width="5.0" height="1.5" fill="#1418cc"/><rect x="1172.7" y="546.6" width="2.0" height="2.0" fill="#1418cc"/><rect x="1246.6" y="552.2" width="5.0" height="2.0" fill="#4048cc"/><rect x="1216.6" y="556.9" width="1.5" height="2.0" fill="#4048cc"/><rect x="1276.6" y="523.6" width="2.0" height="2.0" fill="#1418cc"/><rect x="1180.3" y="535.9" width="2.0" height="1.0" fill="#1418cc"/><rect x="1240.6" y="541.2" width="3.0" height="1.0" fill="#4048cc"/><rect x="1236.2" y="519.8" width="1.5" height="2.0" fill="#1418cc"/><rect x="1191.8" y="548.6" width="4.0" height="1.5" fill="#4048cc"/><rect x="1225.5" y="553.8" width="3.0" height="1.5" fill="#4048cc"/><rect x="1197.3" y="529.0" width="2.0" height="1.0" fill="#1418cc"/><rect x="1239.7" y="537.0" width="3.0" height="2.0" fill="#1418cc"/><rect x="1223.3" y="542.1" width="1.5" height="1.0" fill="#4048cc"/><rect x="1231.6" y="524.3" width="3.0" height="1.0" fill="#1418cc"/><rect x="1286.3" y="527.5" width="1.5" height="2.0" fill="#1418cc"/><rect x="1239.5" y="550.3" width="3.0" height="1.5" fill="#4048cc"/><rect x="1255.4" y="537.7" width="5.0" height="1.5" fill="#4048cc"/><rect x="1173.9" y="528.5" width="3.0" height="1.5" fill="#1418cc"/><rect x="1255.6" y="517.6" width="3.0" height="2.0" fill="#1418cc"/><rect x="1240.1" y="542.9" width="4.0" height="1.5" fill="#4048cc"/><rect x="1258.2" y="548.5" width="3.0" height="1.0" fill="#4048cc"/><rect x="1287.3" y="524.8" width="5.0" height="1.0" fill="#1418cc"/><rect x="1229.2" y="526.6" width="3.0" height="1.0" fill="#1418cc"/><rect x="1261.0" y="529.6" width="4.0" height="1.0" fill="#1418cc"/><rect x="1186.6" y="538.7" width="3.0" height="1.0" fill="#1418cc"/><rect x="1271.5" y="546.1" width="3.0" height="2.0" fill="#4048cc"/><rect x="1219.0" y="533.2" width="4.0" height="1.0" fill="#1418cc"/><rect x="1184.6" y="530.3" width="2.0" height="2.0" fill="#1418cc"/><rect x="1195.3" y="540.8" width="5.0" height="1.0" fill="#1418cc"/><rect x="1199.2" y="522.1" width="4.0" height="2.0" fill="#1418cc"/><rect x="1213.0" y="541.8" width="2.0" height="2.0" fill="#1418cc"/><rect x="1276.7" y="548.7" width="1.5" height="1.5" fill="#4048cc"/><rect x="1281.9" y="541.6" width="5.0" height="1.5" fill="#4048cc"/><rect x="1216.7" y="534.8" width="4.0" height="2.0" fill="#1418cc"/><rect x="1217.1" y="527.0" width="2.0" height="1.5" fill="#1418cc"/><rect x="1186.1" y="536.4" width="1.5" height="1.0" fill="#1418cc"/><rect x="1165.0" y="531.7" width="1.5" height="1.5" fill="#1418cc"/><rect x="1244.8" y="519.1" width="2.0" height="2.0" fill="#1418cc"/><rect x="1213.9" y="544.2" width="3.0" height="2.0" fill="#4048cc"/><rect x="1212.3" y="525.0" width="4.0" height="1.5" fill="#1418cc"/><rect x="1227.5" y="530.4" width="2.0" height="1.0" fill="#1418cc"/><rect x="1262.5" y="542.4" width="4.0" height="2.0" fill="#4048cc"/><rect x="1186.0" y="524.4" width="5.0" height="1.5" fill="#1418cc"/><rect x="1184.1" y="544.4" width="1.5" height="2.0" fill="#1418cc"/><rect x="1203.8" y="545.8" width="1.5" height="2.0" fill="#4048cc"/><rect x="1274.9" y="532.5" width="2.0" height="1.5" fill="#1418cc"/><rect x="1265.4" y="534.2" width="5.0" height="1.5" fill="#1418cc"/><rect x="1247.7" y="539.4" width="2.0" height="1.0" fill="#4048cc"/><rect x="1271.4" y="541.3" width="2.0" height="1.0" fill="#4048cc"/><rect x="1232.3" y="531.4" width="1.5" height="1.0" fill="#1418cc"/><rect x="1267.7" y="531.6" width="2.0" height="2.0" fill="#1418cc"/><rect x="1243.7" y="529.6" width="3.0" height="1.5" fill="#1418cc"/><rect x="1175.5" y="528.6" width="4.0" height="1.0" fill="#1418cc"/><rect x="1208.9" y="539.1" width="5.0" height="1.0" fill="#1418cc"/><rect x="1227.3" y="543.3" width="1.5" height="2.0" fill="#4048cc"/><rect x="1180.6" y="538.9" width="2.0" height="1.5" fill="#1418cc"/><rect x="1280.6" y="528.6" width="3.0" height="1.0" fill="#1418cc"/><rect x="1269.1" y="550.4" width="4.0" height="1.5" fill="#4048cc"/><rect x="1217.2" y="555.7" width="2.0" height="1.0" fill="#4048cc"/><rect x="1294.1" y="511.6" width="5.0" height="1.5" fill="#1418cc"/><rect x="1269.8" y="519.0" width="5.0" height="1.5" fill="#1418cc"/><rect x="1250.4" y="529.1" width="5.0" height="2.0" fill="#1418cc"/><rect x="1182.0" y="524.5" width="1.5" height="2.0" fill="#1418cc"/><rect x="1262.4" y="519.6" width="2.0" height="1.0" fill="#1418cc"/><rect x="1168.6" y="533.6" width="5.0" height="1.0" fill="#1418cc"/><rect x="1264.3" y="526.5" width="5.0" height="1.5" fill="#1418cc"/><rect x="1273.4" y="515.3" width="3.0" height="1.5" fill="#1418cc"/><rect x="1173.2" y="697.8" width="3.0" height="2.0" fill="#1418cc"/><rect x="1168.6" y="662.8" width="1.5" height="2.0" fill="#1418cc"/><rect x="1171.3" y="693.1" width="1.5" height="1.0" fill="#1418cc"/><rect x="1166.6" y="687.0" width="3.0" height="1.0" fill="#3c40c8"/><rect x="1173.9" y="663.7" width="2.0" height="1.0" fill="#1418cc"/><rect x="1158.7" y="633.2" width="1.5" height="3.0" fill="#3c40c8"/><rect x="1169.7" y="691.2" width="1.5" height="2.0" fill="#3c40c8"/><rect x="1171.4" y="660.7" width="3.0" height="1.0" fill="#3c40c8"/><rect x="1165.8" y="664.0" width="2.0" height="3.0" fill="#1418cc"/><rect x="1174.5" y="705.2" width="2.0" height="3.0" fill="#1418cc"/><rect x="1179.4" y="616.5" width="1.5" height="2.0" fill="#3c40c8"/><rect x="1161.1" y="680.5" width="2.0" height="1.0" fill="#1418cc"/><rect x="1173.4" y="694.1" width="1.5" height="3.0" fill="#3c40c8"/><rect x="1155.0" y="705.9" width="2.0" height="1.0" fill="#1418cc"/><rect x="1163.9" y="658.5" width="3.0" height="1.0" fill="#1418cc"/><rect x="1174.7" y="719.3" width="2.0" height="2.0" fill="#3c40c8"/><rect x="1156.9" y="638.2" width="3.0" height="2.0" fill="#1418cc"/><rect x="1161.8" y="655.0" width="3.0" height="1.0" fill="#3c40c8"/><rect x="1161.6" y="674.9" width="3.0" height="1.0" fill="#1418cc"/><rect x="1184.5" y="694.6" width="1.5" height="1.0" fill="#3c40c8"/><rect x="1159.5" y="708.7" width="1.5" height="2.0" fill="#1418cc"/><rect x="1178.7" y="702.0" width="3.0" height="2.0" fill="#3c40c8"/><rect x="1155.2" y="710.3" width="3.0" height="2.0" fill="#3c40c8"/><rect x="1153.1" y="606.9" width="3.0" height="1.0" fill="#3c40c8"/><rect x="1181.3" y="632.3" width="1.5" height="3.0" fill="#1418cc"/><rect x="1178.1" y="610.0" width="1.5" height="1.0" fill="#3c40c8"/><rect x="1180.2" y="654.5" width="2.0" height="3.0" fill="#3c40c8"/><rect x="1182.4" y="632.1" width="1.5" height="1.0" fill="#1418cc"/><rect x="1182.8" y="716.3" width="2.0" height="1.0" fill="#1418cc"/><rect x="1157.1" y="637.4" width="2.0" height="3.0" fill="#1418cc"/>
<g filter="url(#b1)"><path d="M1087 489 C1095 495 1128 495 1137 487 L1139 590 C1130 615 1112 640 1100 640 L1090 600 L1084 592 Z" fill="#a8c4d0" opacity="0.2" /><path d="M1097 900 L1212.7 844.7 L1223 877.7 L1220 888 L1131.5 944 L1098.5 911 Z" fill="#aab2dc" opacity="0.42" /><path d="M1097 900 L1212.7 844.7 L1215 852 L1101 907 Z" fill="#c4c8e0" opacity="0.42" /><path d="M1141 843 L1208 823 L1240 812 L1243 822 L1210 836 L1141 858 Z" fill="#b4bcd8" opacity="0.42" /><path d="M1144 858 L1156 854 L1156 898 L1144 902 Z" fill="#a8b0d4" opacity="0.4" /><path d="M1176 852 L1190 847 L1190 902 L1176 906 Z" fill="#a8b0d4" opacity="0.42" /><ellipse cx="1182" cy="904" rx="7" ry="4.5" fill="#2636b0" opacity="0.7"/><ellipse cx="1150" cy="897" rx="6" ry="4.5" fill="#38c878" opacity="0.8"/><path d="M1124 748 L1141 748 L1140 872 L1128 880 Z" fill="#6f7ca8" opacity="0.55" /><path d="M1112 752 L1126 748 L1132 870 L1098 900 L1072 870 L1088 838 Z" fill="#7f9aa8" opacity="0.28" /><ellipse cx="1098.5" cy="845" rx="13" ry="9" fill="#8cc0c8" transform="rotate(-35 1098.5 845)" opacity="0.6"/><ellipse cx="1100" cy="846" rx="7" ry="3.5" fill="#2a70a0" transform="rotate(-35 1100 846)" opacity="0.8"/><path d="M1270 726 L1279 724 L1270 760 L1262 800 L1250 822 L1244 820 L1258 790 Z" fill="#c8c8c4" opacity="0.45" /></g>
<path d="M1184 349 C1168 372 1156 410 1151 437 L1152 438.5 C1165 436 1180 425 1190 410 C1196 402 1199 398 1198 394 C1195 388 1188 372 1184.6 356 Z" fill="#d4d2cf" />
<defs><linearGradient id="ab" gradientUnits="userSpaceOnUse" x1="0" y1="350" x2="0" y2="570"><stop offset="0" stop-color="#3d5c9a"/><stop offset="0.35" stop-color="#4a8090"/><stop offset="0.7" stop-color="#3c9c5a"/><stop offset="1" stop-color="#3aa04c"/></linearGradient></defs>
<g filter="url(#b1)"><path d="M1182 349 C1166 372 1153 410 1147.5 437 C1142 470 1140.5 520 1143 566" fill="none" stroke="url(#ab)" stroke-width="7" opacity="0.95" /><path d="M1184.5 349 C1169 372 1157 410 1151.5 437 C1148 462 1147 500 1148 540" fill="none" stroke="#9fb4b4" stroke-width="1.6" opacity="0.7" /><path d="M1197.5 395 C1196 404 1186 420 1172 431" fill="none" stroke="#2a78d8" stroke-width="2.4" /><path d="M1152 439 C1165 437 1180 427 1190 412" fill="none" stroke="#8a9cb0" stroke-width="2" opacity="0.8" /></g>
<path d="M1172 431 C1180 425 1188 414 1192 404 C1186 408 1176 420 1169 432 Z" fill="#f6f6f6" />
</g>
<g filter="url(#b1)"><defs><linearGradient id="rg1" gradientUnits="userSpaceOnUse" x1="1185" y1="680" x2="1332" y2="620"><stop offset="0" stop-color="#29299e"/><stop offset="0.45" stop-color="#2a2aa6"/><stop offset="0.8" stop-color="#1c1ccc"/><stop offset="1" stop-color="#1a1ad0"/></linearGradient><linearGradient id="rg2" gradientUnits="userSpaceOnUse" x1="1195" y1="670" x2="1312" y2="625"><stop offset="0" stop-color="#30309c"/><stop offset="0.6" stop-color="#3438b8"/><stop offset="1" stop-color="#3a3ec6"/></linearGradient><clipPath id="bore"><ellipse cx="1248.5" cy="650" rx="52.5" ry="80" transform="rotate(22 1248.5 650)"/></clipPath></defs><ellipse cx="1257" cy="652" rx="69.5" ry="99" transform="rotate(22 1257 652)" fill="url(#rg1)"/><ellipse cx="1253" cy="647" rx="59.5" ry="87" transform="rotate(22 1253 647)" fill="url(#rg2)" stroke="#1c1c96" stroke-width="1.1"/><ellipse cx="1248.5" cy="650" rx="52.5" ry="80" transform="rotate(22 1248.5 650)" fill="#3c44c8" stroke="#1a1a9a" stroke-width="1.6"/><g clip-path="url(#bore)"><g filter="url(#b4)"><ellipse cx="1262" cy="660" rx="24" ry="48" transform="rotate(22 1262 660)" fill="#4a56d4" opacity="0.85"/><ellipse cx="1254" cy="655" rx="8" ry="22" transform="rotate(22 1254 655)" fill="#4a6ad8" opacity="0.8"/><path d="M1248 585 C1252 600 1250 618 1240 636 C1228 656 1210 676 1192 694 L1186 684 L1225 610 Z" fill="#2058e4"/><path d="M1250 600 C1250 618 1244 634 1236 646" fill="none" stroke="#2a78e4" stroke-width="5"/></g></g><path d="M1245 581 C1225 598 1197 640 1190 677 C1197 670 1209 655 1218 645.5 C1228 632 1236 618 1239 608 C1242 598 1245 590 1245 581 Z" fill="#dedddd" /><path d="M1205.6 630.3 L1231 620.7" fill="none" stroke="#e01818" stroke-width="0.9" /></g>
<path d="M1165.4 462 L1165.4 530 L1163 565" fill="none" stroke="#3ddc4a" stroke-width="1.1" />
<path d="M1148.5 758 L1146.5 818" fill="none" stroke="#3ddc2a" stroke-width="1.2" />
<path d="M1074.6 681.4 L1121 663.8" fill="none" stroke="#e02020" stroke-width="0.9" />
</svg>
<svg style="left:664px;top:125px" width="1237" height="939" viewBox="664 125 1237 939">
<defs><filter id="axb" x="-20%" y="-20%" width="140%" height="140%"><feGaussianBlur stdDeviation="0.45"/></filter></defs>
<g filter="url(#axb)">
<path d="M782.3 947.3 L749.8 930.2" stroke="#f2f06e" stroke-width="1.8" fill="none"/>
<path d="M782.3 947.3 L813.5 935.8" stroke="#e0202a" stroke-width="1.1" fill="none"/>
<path d="M782.3 947.3 L786.6 899" stroke="#3be03b" stroke-width="1.2" fill="none"/>
<path d="M787.9 884.6 L792.6 898.6 Q787.5 900.6 781.9 898.2 Z" fill="#2ee02a"/>
<path d="M739.6 924.8 L751.9 925.4 L746.8 934.2 Z" fill="#8f8f08"/>
<path d="M745.5 929 L751.6 926 L749.8 931 Z" fill="#c8c83a"/>
<circle cx="816.8" cy="934.3" r="4.2" fill="#b30808"/>
<path d="M820 936.5 L823.5 932" stroke="#222" stroke-width="0.9"/>
</g>
</svg>
<span class="t" style="left:790.5px;top:882.7px;font-size:19.00px;height:19.0px;line-height:19.0px;letter-spacing:0.000px;word-spacing:-1.43px;color:#fff;">Z</span>
<span class="t" style="left:750.0px;top:914.5px;font-size:18.50px;height:18.5px;line-height:18.5px;letter-spacing:0.000px;word-spacing:-1.39px;color:#fff;">Y</span>
<span class="t" style="left:819.5px;top:919.5px;font-size:18.50px;height:18.5px;line-height:18.5px;letter-spacing:0.000px;word-spacing:-1.39px;color:#fff;">X</span>
<span class="t" style="left:1643.5px;top:612.5px;font-size:20.00px;height:20.0px;line-height:20.0px;letter-spacing:0.237px;word-spacing:-1.50px;color:#111;-webkit-text-stroke:0.2px #e0e0e0;">von Mises stress (Pa)</span>
<div class="abs" style="left:1729px;top:651px;width:21px;height:362px;background:linear-gradient(#ff1212 0.0%,#ff3a0c 6.0%,#ff7a08 12.5%,#ffb40a 19.0%,#fff010 25.0%,#d6fa10 31.0%,#9cf010 37.5%,#58ec10 44.0%,#2cec14 50.0%,#22ec3a 56.0%,#22ee7c 62.5%,#2af0c2 69.0%,#3af4fa 75.0%,#2cbcff 81.0%,#2884ff 87.5%,#2444ff 94.0%,#2014f6 100.0%)"></div>
<svg style="left:1729px;top:640px" width="40" height="380" viewBox="1729 640 40 380"><g stroke="#222" stroke-width="0.9" fill="none"><path d="M1750.5 651.30 H1758.5"/><path d="M1750.5 660.33 H1758.5"/><path d="M1750.5 669.37 H1758.5"/><path d="M1750.5 678.40 H1758.5"/><path d="M1750.5 687.44 H1758.5"/><path d="M1750.5 696.47 H1758.5"/><path d="M1750.5 705.51 H1758.5"/><path d="M1750.5 714.54 H1758.5"/><path d="M1750.5 723.58 H1758.5"/><path d="M1750.5 732.62 H1758.5"/><path d="M1741.5 741.65 H1758.5"/><path d="M1750.5 750.68 H1758.5"/><path d="M1750.5 759.72 H1758.5"/><path d="M1750.5 768.75 H1758.5"/><path d="M1750.5 777.79 H1758.5"/><path d="M1750.5 786.83 H1758.5"/><path d="M1750.5 795.86 H1758.5"/><path d="M1750.5 804.89 H1758.5"/><path d="M1750.5 813.93 H1758.5"/><path d="M1750.5 822.97 H1758.5"/><path d="M1741.5 832.00 H1758.5"/><path d="M1750.5 841.03 H1758.5"/><path d="M1750.5 850.07 H1758.5"/><path d="M1750.5 859.11 H1758.5"/><path d="M1750.5 868.14 H1758.5"/><path d="M1750.5 877.17 H1758.5"/><path d="M1750.5 886.21 H1758.5"/><path d="M1750.5 895.25 H1758.5"/><path d="M1750.5 904.28 H1758.5"/><path d="M1750.5 913.32 H1758.5"/><path d="M1741.5 922.35 H1758.5"/><path d="M1750.5 931.38 H1758.5"/><path d="M1750.5 940.42 H1758.5"/><path d="M1750.5 949.46 H1758.5"/><path d="M1750.5 958.49 H1758.5"/><path d="M1750.5 967.53 H1758.5"/><path d="M1750.5 976.56 H1758.5"/><path d="M1750.5 985.60 H1758.5"/><path d="M1750.5 994.63 H1758.5"/><path d="M1750.5 1003.67 H1758.5"/><path d="M1750.5 1012.70 H1758.5"/></g></svg>
<span class="t" style="left:1762.5px;top:638.4px;font-size:21.00px;height:21.0px;line-height:21.0px;letter-spacing:-0.607px;word-spacing:-1.57px;color:#111;-webkit-text-stroke:0.2px #e0e0e0;">1.048e+08</span>
<span class="t" style="left:1762.5px;top:727.9px;font-size:21.00px;height:21.0px;line-height:21.0px;letter-spacing:-0.607px;word-spacing:-1.57px;color:#111;-webkit-text-stroke:0.2px #e0e0e0;">7.8639e+7</span>
<span class="t" style="left:1762.5px;top:818.9px;font-size:21.00px;height:21.0px;line-height:21.0px;letter-spacing:-0.607px;word-spacing:-1.57px;color:#111;-webkit-text-stroke:0.2px #e0e0e0;">5.2432e+7</span>
<span class="t" style="left:1762.5px;top:909.9px;font-size:21.00px;height:21.0px;line-height:21.0px;letter-spacing:-0.607px;word-spacing:-1.57px;color:#111;-webkit-text-stroke:0.2px #e0e0e0;">2.6226e+7</span>
<span class="t" style="left:1762.5px;top:1000.4px;font-size:21.00px;height:21.0px;line-height:21.0px;letter-spacing:-0.607px;word-spacing:-1.57px;color:#111;-webkit-text-stroke:0.2px #e0e0e0;">1.959e+04</span>
<div class="abs" style="left:1663.5px;top:1035.5px;width:146px;height:30px;background:#225f9c;border-radius:3px 3px 0 0"></div>
<svg style="left:1677.5px;top:1042px" width="28" height="18" viewBox="0 0 28 18"><ellipse cx="13.6" cy="8.2" rx="13.6" ry="8.2" fill="#fff"/><path d="M20 13 L26.6 17.6 L23.5 11 Z" fill="#fff"/><path d="M6.2 4.6 H9.4 L10.4 3.2 H14.2 L15.2 4.6 H20.6 V13 H6.2 Z" fill="#225f9c"/><rect x="16.6" y="2.6" width="2.6" height="2" fill="#225f9c"/><circle cx="13.4" cy="8.8" r="3" fill="#fff"/><circle cx="13.4" cy="8.8" r="1.7" fill="#225f9c"/></svg>
<span class="t" style="left:1711.0px;top:1046.1px;font-size:12.20px;height:12.2px;line-height:12.2px;letter-spacing:-0.531px;word-spacing:0.00px;color:#fff;font-weight:700;">Report an issue</span>
<div class="abs" style="left:1815.5px;top:1035.5px;width:74.5px;height:30px;background:#225f9c;border-radius:3px 3px 0 0"></div>
<svg style="left:1828px;top:1044px" width="18" height="16" viewBox="0 0 18 16"><path d="M0.3 0.3 H17.7 V11.3 H7.2 L2.6 15.6 V11.3 H0.3 Z" fill="#fff"/></svg>
<span class="t" style="left:1855.0px;top:1046.1px;font-size:12.20px;height:12.2px;line-height:12.2px;letter-spacing:-0.698px;word-spacing:0.00px;color:#fff;font-weight:700;">Chat</span>
<div class="abs" style="left:1160.5px;top:86.5px;width:221.5px;height:239px;background:#fff;border:1px solid #c3d9ea;border-radius:4px"></div>
<svg style="left:1168px;top:95.5px" width="28" height="11" viewBox="0 0 28 11"><path d="M0.3 5.5 L7.6 0.3 V3.7 H20.4 V0.3 L27.7 5.5 L20.4 10.7 V7.3 H7.6 V10.7 Z" fill="#4686b3"/></svg>
<span class="t" style="left:1203.5px;top:95.0px;font-size:12.48px;height:12.5px;line-height:12.5px;letter-spacing:-1.051px;word-spacing:-0.97px;color:#3a7db0;">Scale</span>
<div class="abs" style="left:1171px;top:115px;width:200px;height:42px;background:#eee;border-radius:2px"></div>
<span class="t" style="left:1181.5px;top:130.4px;font-size:13.63px;height:13.6px;line-height:13.6px;letter-spacing:-0.580px;word-spacing:-1.06px;color:#3a7db0;">Auto-Range</span>
<div class="btn" style="left:1297.5px;top:125.5px;width:30px;height:22px;border-radius:3px;box-shadow:0 1px 1px rgba(0,0,0,.1)"></div>
<svg style="left:1305.5px;top:134px" width="15" height="6" viewBox="0 0 15 6"><path d="M0 3 L3.4 0.3 V2.2 H6 V3.8 H3.4 V5.7 Z M15 3 L11.6 0.3 V2.2 H9 V3.8 H11.6 V5.7 Z" fill="#3f82b0"/></svg>
<div class="btn" style="left:1331.5px;top:125.5px;width:29.5px;height:22px;border-radius:3px;box-shadow:0 1px 1px rgba(0,0,0,.1)"></div>
<svg style="left:1339px;top:130px" width="14" height="14" viewBox="0 0 14 14"><circle cx="7" cy="7" r="6" fill="none" stroke="#3f82b0" stroke-width="1.4"/><path d="M7 3.4 V7.2 L9.6 9.2" fill="none" stroke="#3f82b0" stroke-width="1.3"/></svg>
<div class="abs" style="left:1171px;top:167px;width:200px;height:149px;background:#eee;border-radius:2px"></div>
<span class="t" style="left:1181.5px;top:180.9px;font-size:11.52px;height:11.5px;line-height:11.5px;letter-spacing:0.091px;word-spacing:-0.90px;color:#3a7db0;">Custom Data Range</span>
<div class="abs" style="left:1181px;top:203.5px;width:180px;height:1px;background:#8a8a8a"></div>
<span class="t" style="left:1181.5px;top:212.8px;font-size:9.79px;height:9.8px;line-height:9.8px;letter-spacing:0.617px;word-spacing:-0.76px;color:#3a7db0;">Min</span>
<span class="t" style="left:1342.5px;top:212.8px;font-size:9.79px;height:9.8px;line-height:9.8px;letter-spacing:0.008px;word-spacing:-0.76px;color:#3a7db0;">Max</span>
<div class="abs" style="left:1181px;top:232.5px;width:180px;height:9.5px;border:1px solid #999;background:linear-gradient(90deg,#1a1aff 0%,#2a4cff 10%,#33b5ff 20%,#3dffd6 30%,#3cff6a 40%,#55ff10 52%,#a0ff10 64%,#e8ee10 75%,#ffc000 82%,#ff6a00 91%,#ee1010 100%)"></div>
<div class="inp" style="left:1181px;top:249.5px;width:80px;height:19px;border-radius:3px"></div>
<span class="t" style="left:1184.0px;top:254.3px;font-size:11.71px;height:11.7px;line-height:11.7px;letter-spacing:0.000px;word-spacing:-0.91px;color:#3a7db0;">0</span>
<div class="inp" style="left:1283px;top:249.5px;width:80px;height:19px;border-radius:3px"></div>
<span class="t" style="left:1286.5px;top:254.3px;font-size:11.71px;height:11.7px;line-height:11.7px;letter-spacing:0.363px;word-spacing:-0.91px;color:#3a7db0;">250e6</span>
<div class="btn" style="left:1181px;top:277.5px;width:182px;height:28px;border-radius:3px;box-shadow:0 1px 1px rgba(0,0,0,.08)"></div>
<span class="t" style="left:1263.5px;top:286.8px;font-size:11.71px;height:11.7px;line-height:11.7px;letter-spacing:0.078px;word-spacing:-0.91px;color:#3a7db0;">OK</span>
<div class="abs" style="left:1154px;top:77.5px;width:237px;height:252.5px;border:5px solid #ec1c24"></div>
</body>
</html>
